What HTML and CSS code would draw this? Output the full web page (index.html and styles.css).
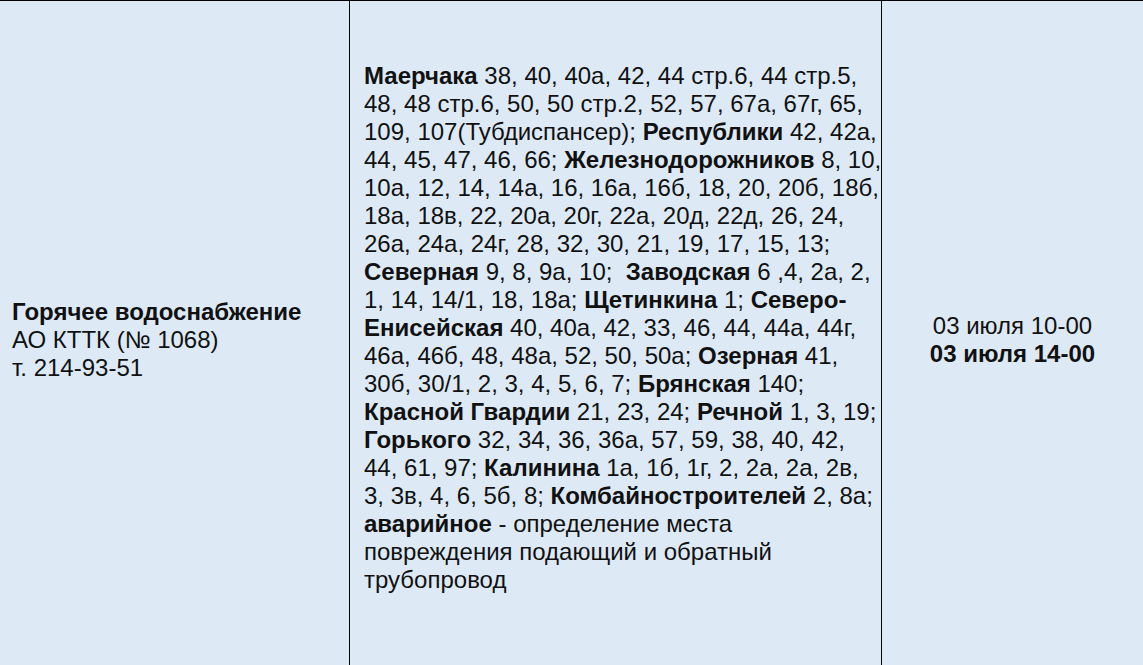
FILE: index.html
```html
<!DOCTYPE html>
<html lang="ru">
<head>
<meta charset="utf-8">
<title>Отключения</title>
<link rel="stylesheet" href="styles.css">
</head>
<body>
<div class="row">
  <div class="cell cell-service">
    <b>Горячее водоснабжение</b><br>
    АО КТТК (№ 1068)<br>
    т. 214-93-51
  </div>
  <div class="cell cell-address">
    <b>Маерчака</b> 38, 40, 40а, 42, 44 стр.6, 44 стр.5,<br>
    48, 48 стр.6, 50, 50 стр.2, 52, 57, 67а, 67г, 65,<br>
    109, 107(Тубдиспансер); <b>Республики</b> 42, 42а,<br>
    44, 45, 47, 46, 66; <b>Железнодорожников</b> 8, 10,<br>
    10а, 12, 14, 14а, 16, 16а, 16б, 18, 20, 20б, 18б,<br>
    18а, 18в, 22, 20а, 20г, 22а, 20д, 22д, 26, 24,<br>
    26а, 24а, 24г, 28, 32, 30, 21, 19, 17, 15, 13;<br>
    <b>Северная</b> 9, 8, 9а, 10;&nbsp; <b>Заводская</b> 6 ,4, 2а, 2,<br>
    1, 14, 14/1, 18, 18а; <b>Щетинкина</b> 1; <b>Северо-</b><br>
    <b>Енисейская</b> 40, 40а, 42, 33, 46, 44, 44а, 44г,<br>
    46а, 46б, 48, 48а, 52, 50, 50а; <b>Озерная</b> 41,<br>
    30б, 30/1, 2, 3, 4, 5, 6, 7; <b>Брянская</b> 140;<br>
    <b>Красной Гвардии</b> 21, 23, 24; <b>Речной</b> 1, 3, 19;<br>
    <b>Горького</b> 32, 34, 36, 36а, 57, 59, 38, 40, 42,<br>
    44, 61, 97; <b>Калинина</b> 1а, 1б, 1г, 2, 2а, 2а, 2в,<br>
    3, 3в, 4, 6, 5б, 8; <b>Комбайностроителей</b> 2, 8а;<br>
    <b>аварийное</b> - определение места<br>
    повреждения подающий и обратный<br>
    трубопровод
  </div>
  <div class="cell cell-time">
    03 июля 10-00<br>
    <b>03 июля 14-00</b>
  </div>
</div>
</body>
</html>
```

FILE: styles.css
```css
html, body {
  margin: 0;
  padding: 0;
  background: #ddeaf6;
}

body {
  font-family: "Liberation Sans", Arial, sans-serif;
  font-size: 24px;
  line-height: 28px;
  color: #111;
  overflow: hidden;
}

.row {
  display: flex;
  align-items: stretch;
  border-top: 1px solid #000;
  background: #ddeaf6;
}

.cell b {
  font-weight: bold;
}

.cell-service {
  width: 349px;
  box-sizing: border-box;
  padding-left: 12px;
  align-self: center;
}

.cell-address {
  width: 532px;
  box-sizing: border-box;
  border-left: 1px solid #000;
  padding: 61px 0 85px 14px;
  white-space: nowrap;
}

.cell-time {
  flex: 1;
  border-left: 1px solid #000;
  text-align: center;
  display: flex;
  flex-direction: column;
  justify-content: center;
}
```
